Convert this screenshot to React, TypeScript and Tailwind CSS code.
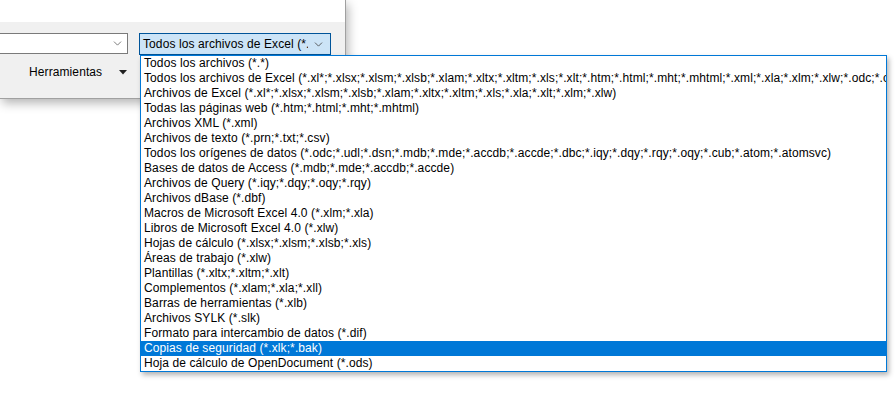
import { ChevronDown } from "lucide-react";

const fileTypes = [
  "Todos los archivos (*.*)",
  "Todos los archivos de Excel (*.xl*;*.xlsx;*.xlsm;*.xlsb;*.xlam;*.xltx;*.xltm;*.xls;*.xlt;*.htm;*.html;*.mht;*.mhtml;*.xml;*.xla;*.xlm;*.xlw;*.odc;*.ods)",
  "Archivos de Excel (*.xl*;*.xlsx;*.xlsm;*.xlsb;*.xlam;*.xltx;*.xltm;*.xls;*.xla;*.xlt;*.xlm;*.xlw)",
  "Todas las páginas web (*.htm;*.html;*.mht;*.mhtml)",
  "Archivos XML (*.xml)",
  "Archivos de texto (*.prn;*.txt;*.csv)",
  "Todos los orígenes de datos (*.odc;*.udl;*.dsn;*.mdb;*.mde;*.accdb;*.accde;*.dbc;*.iqy;*.dqy;*.rqy;*.oqy;*.cub;*.atom;*.atomsvc)",
  "Bases de datos de Access (*.mdb;*.mde;*.accdb;*.accde)",
  "Archivos de Query (*.iqy;*.dqy;*.oqy;*.rqy)",
  "Archivos dBase (*.dbf)",
  "Macros de Microsoft Excel 4.0 (*.xlm;*.xla)",
  "Libros de Microsoft Excel 4.0 (*.xlw)",
  "Hojas de cálculo (*.xlsx;*.xlsm;*.xlsb;*.xls)",
  "Áreas de trabajo (*.xlw)",
  "Plantillas (*.xltx;*.xltm;*.xlt)",
  "Complementos (*.xlam;*.xla;*.xll)",
  "Barras de herramientas (*.xlb)",
  "Archivos SYLK (*.slk)",
  "Formato para intercambio de datos (*.dif)",
  "Copias de seguridad (*.xlk;*.bak)",
  "Hoja de cálculo de OpenDocument (*.ods)",
];

const selected = 19;

export default function App() {
  return (
    <div
      className="relative w-[896px] h-[403px] bg-white overflow-hidden text-[12px] tracking-[0.1px] leading-[15px] text-black"
      style={{ fontFamily: '"Liberation Sans", Arial, sans-serif' }}
    >
      {/* dialog panel */}
      <div className="w-[346px] h-[99px] flex flex-col border-r border-b border-[#a0a0a0] shadow-[2px_4px_10px_rgba(0,0,0,0.3)]">
        <div className="h-[22px] bg-white" />
        <div className="flex-1 bg-[#f0f0f0] flex flex-col">
          <div className="flex items-start mt-[11px]">
            <div className="w-[129px] h-[21px] -ml-px bg-white border border-[#7a7a7a] flex items-center justify-end pr-[3px]">
              <ChevronDown className="w-[13px] h-[13px] text-[#606060]" strokeWidth={1.5} />
            </div>
            <div className="ml-[11px] w-[192px] h-[22px] bg-[#cce4f7] border border-[#005499] flex items-center">
              <span className="w-[168px] overflow-hidden whitespace-nowrap pl-[3px]">
                Todos los archivos de Excel (*.xlsx;*.xlsm)
              </span>
              <ChevronDown className="ml-[4px] w-[13px] h-[13px] text-[#404040]" strokeWidth={1.5} />
            </div>
          </div>
          <div className="flex items-center mt-[9px] h-[16px]">
            <span className="ml-[29px]">Herramientas</span>
            <svg className="ml-[17px]" width="8" height="5" viewBox="0 0 8 5">
              <path d="M0 0h8L4 4.5z" fill="#202020" />
            </svg>
          </div>
        </div>
      </div>

      {/* open file-type dropdown */}
      <ul className="absolute left-[140px] top-[55px] w-[747px] bg-white border border-[#0078d7] shadow-[2px_3px_5px_rgba(0,0,0,0.3)]">
        {fileTypes.map((t, i) => (
          <li
            key={t}
            className={`h-[15px] pl-[3px] whitespace-nowrap overflow-hidden ${
              i === selected ? "bg-[#0078d7] text-white" : ""
            }`}
          >
            {t}
          </li>
        ))}
      </ul>
    </div>
  );
}
